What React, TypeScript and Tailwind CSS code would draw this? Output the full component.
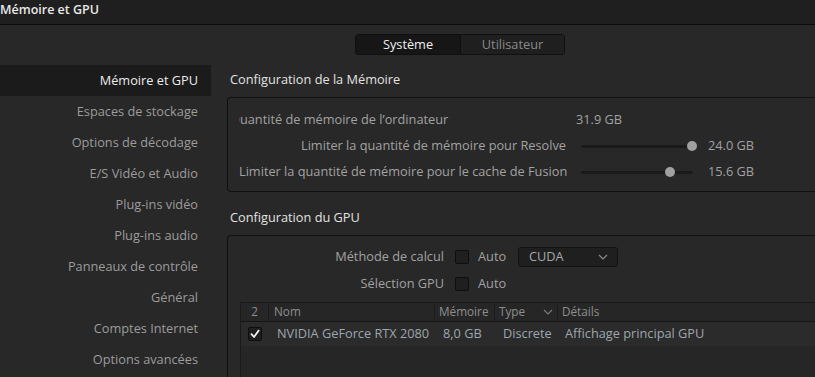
import React from "react";

const sidebar = [
  "Mémoire et GPU",
  "Espaces de stockage",
  "Options de décodage",
  "E/S Vidéo et Audio",
  "Plug-ins vidéo",
  "Plug-ins audio",
  "Panneaux de contrôle",
  "Général",
  "Comptes Internet",
  "Options avancées",
];

function Checkbox({ checked }: { checked?: boolean }) {
  return (
    <div className="w-[14px] h-[14px] rounded-[2px] border border-[#0e0e0e] bg-[#1f1f1f] flex items-center justify-center shrink-0">
      {checked && (
        <svg width="10" height="10" viewBox="0 0 10 10">
          <path d="M1.5 5.2 L4 8 L8.6 1.6" stroke="#f2f2f2" strokeWidth="1.8" fill="none" strokeLinecap="round" strokeLinejoin="round" />
        </svg>
      )}
    </div>
  );
}

function Chevron({ color = "#8a8a8a" }: { color?: string }) {
  return (
    <svg width="10" height="6" viewBox="0 0 10 6">
      <path d="M1 1 L5 5 L9 1" stroke={color} strokeWidth="1.2" fill="none" />
    </svg>
  );
}

function Slider({ pos }: { pos: number }) {
  return (
    <div className="relative w-[112px] h-[10px] flex items-center">
      <div className="w-full h-[3px] rounded-full bg-[#1a1a1a]" />
      <div
        className="absolute top-0 w-[10px] h-[10px] rounded-full bg-[#a0a0a0]"
        style={{ left: pos - 5 }}
      />
    </div>
  );
}

export default function App() {
  return (
    <div
      className="w-[815px] h-[377px] overflow-hidden bg-[#282828] text-[12.75px] flex flex-col"
      style={{ fontFamily: '"Open Sans", "Noto Sans", sans-serif' }}
    >
      <div className="h-[25px] shrink-0 bg-[#1f1f1f] border-b border-[#0c0c0c] flex items-center text-[#e8e8e8] text-[12.5px] font-semibold leading-none pb-[3px]">
        Mémoire et GPU
      </div>
      <div className="h-[40px] shrink-0 pt-[9px] pl-[355px]">
        <div className="flex w-[210px] h-[21px] rounded-[3px] border border-[#101010] overflow-hidden">
          <div className="w-[105px] bg-[#161616] text-[#f0f0f0] flex items-center justify-center border-r border-[#0e0e0e] leading-none">
            Système
          </div>
          <div className="flex-1 bg-[#1f1f1f] text-[#8a8a8a] flex items-center justify-center leading-none">
            Utilisateur
          </div>
        </div>
      </div>
      <div className="flex flex-1 min-h-0">
        <div className="w-[211px] shrink-0 flex flex-col">
          {sidebar.map((s, i) => (
            <div
              key={s}
              className={
                "h-[31px] shrink-0 flex items-center justify-end pr-[13px] " +
                (i === 0 ? "bg-[#1b1b1b] text-[#ececec]" : "text-[#9c9c9c]")
              }
            >
              {s}
            </div>
          ))}
        </div>
        <div className="flex-1 pl-[16px] flex flex-col min-w-0">
          <div className="h-[32px] shrink-0 flex items-center pl-[3px] text-[#e2e2e2] pb-[2px]">
            Configuration de la Mémoire
          </div>
          <div className="h-[95px] shrink-0 rounded-l-[4px] border border-r-0 border-[#111111] pl-[11px] pt-[9px] text-[#a2a2a2]">
            <div className="h-[26px] flex items-center">
              <div className="w-[327px] overflow-hidden whitespace-nowrap">
                <span className="ml-[-9px]">Quantité de mémoire de l’ordinateur</span>
              </div>
              <div className="ml-[10px]">31.9 GB</div>
            </div>
            <div className="h-[26px] flex items-center">
              <div className="w-[327px] text-right whitespace-nowrap">Limiter la quantité de mémoire pour Resolve</div>
              <div className="ml-[15px]">
                <Slider pos={111} />
              </div>
              <div className="ml-[15px]">24.0 GB</div>
            </div>
            <div className="h-[26px] flex items-center">
              <div className="w-[327px] text-right whitespace-nowrap">Limiter la quantité de mémoire pour le cache de Fusion</div>
              <div className="ml-[15px]">
                <Slider pos={89} />
              </div>
              <div className="ml-[15px]">15.6 GB</div>
            </div>
          </div>
          <div className="h-[43px] shrink-0 flex items-end pb-[8px] pl-[3px] text-[#e2e2e2]">
            Configuration du GPU
          </div>
          <div className="flex-1 rounded-tl-[4px] border-l border-t border-[#111111] pt-[11px] text-[#a2a2a2]">
            <div className="h-[20px] flex items-center">
              <div className="w-[216px] text-right">Méthode de calcul</div>
              <div className="ml-[11px]">
                <Checkbox />
              </div>
              <div className="ml-[9px] w-[40px]">Auto</div>
              <div className="w-[100px] h-[20px] rounded-[3px] border border-[#121212] bg-[#1f1f1f] flex items-center justify-between pl-[10px] pr-[9px] text-[#a4a8ad]">
                <span>CUDA</span>
                <Chevron />
              </div>
            </div>
            <div className="h-[20px] mt-[7px] flex items-center">
              <div className="w-[216px] text-right">Sélection GPU</div>
              <div className="ml-[11px]">
                <Checkbox />
              </div>
              <div className="ml-[9px]">Auto</div>
            </div>
            <div className="ml-[12px] mt-[8px] border-l border-t border-[#1a1a1a] text-[11.75px]">
              <div className="h-[19px] flex items-center bg-[#262626] border-b border-[#151515] text-[#8e8e8e]">
                <div className="w-[28px] text-center border-r border-[#1c1c1c] h-full flex items-center justify-center">2</div>
                <div className="w-[166px] pl-[5px] border-r border-[#1c1c1c] h-full flex items-center">Nom</div>
                <div className="w-[60px] pl-[4px] border-r border-[#1c1c1c] h-full flex items-center">Mémoire</div>
                <div className="w-[63px] pl-[4px] pr-[4px] border-r border-[#1c1c1c] h-full flex items-center justify-between">
                  <span>Type</span>
                  <Chevron color="#7a7a7a" />
                </div>
                <div className="flex-1 pl-[4px] h-full flex items-center">Détails</div>
              </div>
              <div className="h-[24px] flex items-center bg-[#2b2b2b] text-[12.75px] text-[#9ea6ae]">
                <div className="w-[28px] flex justify-center">
                  <Checkbox checked />
                </div>
                <div className="w-[166px] pl-[8px] whitespace-nowrap">NVIDIA GeForce RTX 2080</div>
                <div className="w-[60px] pl-[8px] whitespace-nowrap">8,0 GB</div>
                <div className="w-[63px] pl-[8px] whitespace-nowrap">Discrete</div>
                <div className="flex-1 pl-[7px] whitespace-nowrap">Affichage principal GPU</div>
              </div>
              <div className="h-[40px] bg-[#262626]" />
            </div>
          </div>
        </div>
      </div>
    </div>
  );
}
